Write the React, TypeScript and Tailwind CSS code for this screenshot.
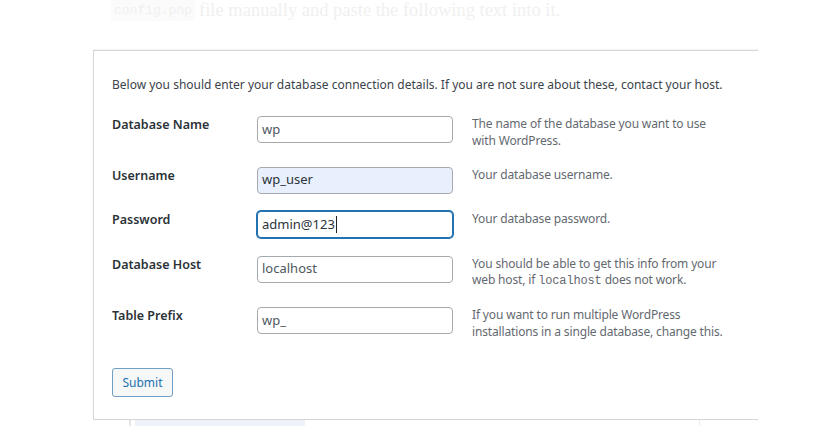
import React from 'react';

type Field = {
  label: string;
  value: string;
  desc: React.ReactNode;
  state?: 'autofill' | 'focus';
};

const fields: Field[] = [
  { label: 'Database Name', value: 'wp', desc: <>The name of the database you want to use<br />with WordPress.</> },
  { label: 'Username', value: 'wp_user', desc: 'Your database username.', state: 'autofill' },
  { label: 'Password', value: 'admin@123', desc: 'Your database password.', state: 'focus' },
  {
    label: 'Database Host',
    value: 'localhost',
    desc: (
      <>
        You should be able to get this info from your
        <br />
        web host, if <code className="font-['Liberation_Mono',monospace] text-[12px]">localhost</code> does not work.
      </>
    ),
  },
  {
    label: 'Table Prefix',
    value: 'wp_',
    desc: <>If you want to run multiple WordPress<br />installations in a single database, change this.</>,
  },
];

const App: React.FC = () => {
  return (
    <div className="w-[825px] h-[426px] overflow-hidden bg-white font-['Noto_Sans',sans-serif]">
      {/* faded page text behind the panel */}
      <div className="h-[50px] pl-[111px] flex items-start">
        <span className="h-[21px] px-[3px] bg-[#fbfbfb] text-[#f0f0f0] font-['Liberation_Mono',monospace] text-[13px] leading-[21px]">
          config.php
        </span>
        <span className="ml-[4px] text-[#f0f0f0] font-['Liberation_Serif',serif] text-[18.5px] leading-[21px]">
          file manually and paste the following text into it.
        </span>
      </div>

      <div className="ml-[93px] w-[665px] border-t border-l border-b border-[#d6d6d8] shadow-[0_-1px_1px_rgba(0,0,0,0.04)] pt-[25px] pl-[18px] pb-[22px]">
        <p className="text-[12px] leading-[18px] text-[#3c434a]">
          Below you should enter your database connection details. If you are not sure about these, contact your host.
        </p>

        <div className="mt-[22px] flex flex-col gap-[17.5px]">
          {fields.map((f) => (
            <div key={f.label} className="flex items-start">
              <div className="w-[145px] text-[12.5px] leading-[18px] font-semibold text-[#2c3338]">
                {f.label}
              </div>
              <div
                className={
                  f.state === 'focus'
                    ? 'w-[196px] h-[27px] rounded-[4px] border border-[#2271b1] shadow-[0_0_0_1px_#2271b1] bg-white px-[4px] flex items-center text-[13px] text-[#2c3338]'
                    : f.state === 'autofill'
                    ? 'w-[196px] h-[27px] rounded-[4px] border border-[#a7aaad] bg-[#e8f0fe] px-[4px] flex items-center text-[13px] text-[#2c3338]'
                    : 'w-[196px] h-[27px] rounded-[4px] border border-[#a7aaad] bg-white px-[4px] flex items-center text-[13px] text-[#50575e]'
                }
              >
                {f.value}
                {f.state === 'focus' && <span className="ml-[1px] w-px h-[17px] bg-[#1d2327]" />}
              </div>
              <div className="ml-[19px] text-[12px] leading-[16.5px] tracking-[-0.15px] text-[#646970]">{f.desc}</div>
            </div>
          ))}
        </div>

        <button className="block mt-[28px] w-[61px] h-[29px] rounded-[3px] border border-[#6f9fc6] bg-[#f6f7f7] text-[12px] text-[#2271b1]">
          Submit
        </button>
      </div>

      {/* faded content below the panel */}
      <div className="flex h-[8px] pl-[129px]">
        <div className="w-[2px] bg-[#e6e6e6]" />
        <div className="ml-[4px] w-[170px] bg-[#eef3fb]" />
        <div className="ml-[394px] w-px bg-[#ececec]" />
      </div>
    </div>
  );
};

export default App;
